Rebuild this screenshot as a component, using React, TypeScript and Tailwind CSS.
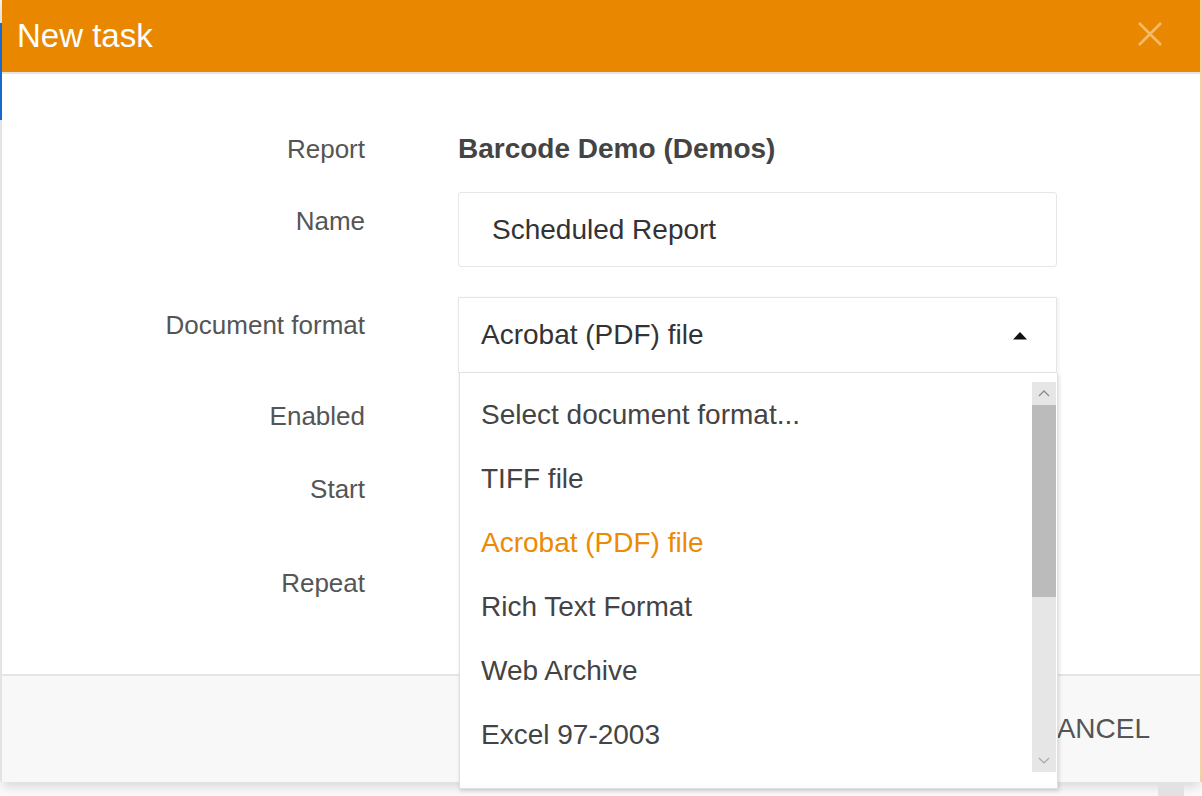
import React from 'react';

const formats = [
  'Select document format...',
  'TIFF file',
  'Acrobat (PDF) file',
  'Rich Text Format',
  'Web Archive',
  'Excel 97-2003',
];

const Label: React.FC<{ text: string; pad?: string }> = ({ text, pad = '' }) => (
  <div className={`w-[363px] shrink-0 text-right text-[26px] leading-[36px] text-[#555] ${pad}`}>{text}</div>
);

const App: React.FC = () => {
  const selected = 'Acrobat (PDF) file';

  return (
    <div className="w-[1202px] h-[796px] overflow-hidden bg-[#fbfbfb] font-['Liberation_Sans',Arial,sans-serif] flex flex-col">
      <div className="flex h-[782px]">
        <div className="w-[2px] flex flex-col">
          <div className="h-[23px] bg-[#f2f2f2]" />
          <div className="h-[97px] bg-[#1a6fd8]" />
          <div className="flex-1 bg-[#f0f0f0]" />
        </div>

        <div className="w-[1198px] flex flex-col bg-white shadow-[0_6px_10px_rgba(0,0,0,0.12)]">
          {/* header */}
          <div className="h-[74px] shrink-0 bg-[#e98700] border-b-2 border-[#e4e4e4] flex items-center justify-between pl-[15px] pr-[38px]">
            <h1 className="text-[33px] leading-none text-white -mt-[2px]">New task</h1>
            <svg width="24" height="24" viewBox="0 0 24 24" className="-mt-[4px]">
              <path d="M1 1 L23 23 M23 1 L1 23" stroke="#f4bb6a" strokeWidth="2.6" fill="none" />
            </svg>
          </div>

          {/* body */}
          <div className="h-[600px] shrink-0 pt-[57px] flex flex-col">
            <div className="flex h-[36px]">
              <Label text="Report" />
              <div className="ml-[93px] text-[28px] leading-[36px] font-bold text-[#444]">Barcode Demo (Demos)</div>
            </div>

            <div className="flex mt-[25px]">
              <Label text="Name" pad="pt-[11px]" />
              <div className="ml-[93px] w-[599px] h-[75px] border border-[#e6e6e6] rounded-[3px] flex items-center pl-[33px] text-[28px] text-[#333]">
                Scheduled Report
              </div>
            </div>

            <div className="flex mt-[30px]">
              <Label text="Document format" pad="pt-[10px]" />
              <div className="ml-[93px] w-[599px] relative z-10">
                <div className="h-[76px] border border-[#e6e6e6] bg-white shadow-[1px_1px_4px_rgba(0,0,0,0.08)] flex items-center justify-between pl-[22px] pr-[28px] text-[28px] text-[#333]">
                  <span>Acrobat (PDF) file</span>
                  <svg width="16" height="9" viewBox="0 0 16 9">
                    <path d="M1 8.5 L8 1 L15 8.5 Z" fill="#111" />
                  </svg>
                </div>
                <div className="absolute left-[1px] top-full w-[599px] h-[416px] bg-white border border-[#e0e0e0] border-t-0 shadow-[1px_2px_4px_rgba(0,0,0,0.15)] flex">
                  <ul className="flex-1 pt-[10px] overflow-hidden">
                    {formats.map((f) => (
                      <li
                        key={f}
                        className={`h-[64px] flex items-center pl-[21px] text-[28px] ${f === selected ? 'text-[#ec8a05]' : 'text-[#444]'}`}
                      >
                        {f}
                      </li>
                    ))}
                  </ul>
                  <div className="w-[24px] mt-[9px] mb-[16px] mr-[1px] bg-[#e6e6e6] flex flex-col">
                    <div className="h-[23px] flex items-center justify-center">
                      <svg width="12" height="7" viewBox="0 0 12 7">
                        <path d="M1 6 L6 1 L11 6" stroke="#8a8a8a" strokeWidth="1.3" fill="none" />
                      </svg>
                    </div>
                    <div className="h-[192px] bg-[#bbbbbb]" />
                    <div className="flex-1 flex items-end justify-center pb-[8px]">
                      <svg width="12" height="7" viewBox="0 0 12 7">
                        <path d="M1 1 L6 6 L11 1" stroke="#a6a6a6" strokeWidth="1.1" fill="none" />
                      </svg>
                    </div>
                  </div>
                </div>
              </div>
            </div>

            <div className="flex mt-[25px]">
              <Label text="Enabled" />
            </div>
            <div className="flex mt-[37px]">
              <Label text="Start" />
            </div>
            <div className="flex mt-[58px]">
              <Label text="Repeat" />
            </div>
          </div>

          {/* footer */}
          <div className="flex-1 bg-[#f8f8f8] border-t-2 border-[#e5e5e5] flex items-center justify-end pr-[50px]">
            <button className="text-[28px] text-[#555]">CANCEL</button>
          </div>
        </div>

        <div className="w-[2px] bg-[#f3d2a2]" />
      </div>

      <div className="h-[14px] flex">
        <div className="ml-[1158px] w-[26px] bg-[#e2e2e2]" />
      </div>
    </div>
  );
};

export default App;
